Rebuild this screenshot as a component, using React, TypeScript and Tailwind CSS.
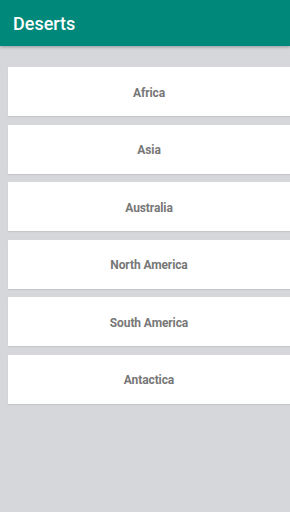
export default function App() {
  const items = ["Africa", "Asia", "Australia", "North America", "South America", "Antactica"];
  return (
    <div className="w-[290px] h-[512px] bg-[#d6d7db] flex flex-col" style={{ fontFamily: "Roboto, sans-serif" }}>
      <div className="h-[46px] bg-[#00897b] flex items-center pl-[13px] shadow-[0_1px_3px_rgba(0,0,0,0.3)] relative z-10">
        <span className="text-white text-[18px] font-medium">Deserts</span>
      </div>
      <div className="flex flex-col gap-[8.5px] pt-[21px] pl-[8px]">
        {items.map((t) => (
          <div key={t} className="h-[49px] bg-white flex items-center justify-center pt-[2px] shadow-[0_1px_1px_rgba(0,0,0,0.08)]">
            <span className="text-[12px] font-bold text-[#777777] tracking-[-0.1px]">{t}</span>
          </div>
        ))}
      </div>
    </div>
  );
}
